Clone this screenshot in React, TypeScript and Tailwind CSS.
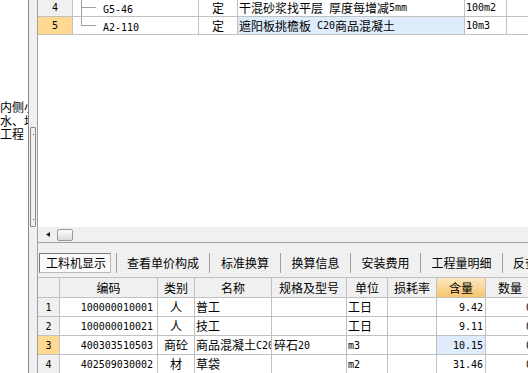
import React from 'react';

type TopRow = { no: string; code: string; type: string; name: string; unit: string; last: boolean; active: boolean };
type ResRow = { no: string; code: string; kind: string; name: string; spec: string; unit: string; loss: string; qty: string; amount: string; active: boolean };

const topRows: TopRow[] = [
  { no: '4', code: 'G5-46', type: '定', name: '干混砂浆找平层 厚度每增减5mm', unit: '100m2', last: false, active: false },
  { no: '5', code: 'A2-110', type: '定', name: '遮阳板挑檐板 C20商品混凝土', unit: '10m3', last: true, active: true },
];

const resRows: ResRow[] = [
  { no: '1', code: '100000010001', kind: '人', name: '普工', spec: '', unit: '工日', loss: '', qty: '9.42', amount: '0', active: false },
  { no: '2', code: '100000010021', kind: '人', name: '技工', spec: '', unit: '工日', loss: '', qty: '9.11', amount: '0', active: false },
  { no: '3', code: '400303510503', kind: '商砼', name: '商品混凝土C20', spec: '碎石20', unit: 'm3', loss: '', qty: '10.15', amount: '0', active: true },
  { no: '4', code: '402509030002', kind: '材', name: '草袋', spec: '', unit: 'm2', loss: '', qty: '31.46', amount: '0', active: false },
];

const tabs = [
  { label: '查看单价构成', w: 'w-[92px]' },
  { label: '标准换算', w: 'w-[70px]' },
  { label: '换算信息', w: 'w-[69px]' },
  { label: '安装费用', w: 'w-[69px]' },
  { label: '工程量明细', w: 'w-[81px]' },
];

// ascii runs get the narrow monospace face, like the half-width glyphs of the original
const Mixed: React.FC<{ text: string }> = ({ text }) => {
  const parts = text.match(/[\x20-\x7e]+|[^\x20-\x7e]+/g) ?? [];
  return (
    <>
      {parts.map((p, i) =>
        /^[\x20-\x7e]+$/.test(p) ? (
          <span key={i} className="font-['DejaVu_Sans_Mono',monospace] text-[10px] whitespace-pre">
            {p}
          </span>
        ) : (
          <span key={i}>{p}</span>
        )
      )}
    </>
  );
};

const cell = 'shrink-0 h-full flex items-center border-r border-[#c0c0c0] overflow-hidden whitespace-nowrap';

export default function App() {
  return (
    <div className="w-[528px] h-[373px] overflow-hidden bg-white flex text-[12px] text-black font-['Noto_Sans_CJK_SC',sans-serif]">
      {/* left pane, mostly hidden behind the splitter */}
      <div className="w-[28px] shrink-0 overflow-hidden pt-[100px] leading-[13.5px] whitespace-nowrap">
        <div>内侧小</div>
        <div>水、地</div>
        <div>工程</div>
      </div>

      {/* splitter */}
      <div className="w-[9px] shrink-0 bg-[#f0f0f0] border-l border-[#8a8a8a] pl-px pt-[127px]">
        <div className="w-[6px] h-[100px] border border-[#8a8a8a] rounded-[1px] flex flex-col items-center justify-between py-[6px]">
          <div className="w-px h-px bg-[#404080]" />
          <div className="w-px h-px bg-[#404080]" />
        </div>
      </div>

      {/* main */}
      <div className="w-[491px] shrink-0 flex flex-col border-l border-[#a0a0a0]">
        {/* top grid */}
        <div className="h-[227px] shrink-0 overflow-hidden">
          <div className="-mt-px">
            {topRows.map((r) => (
              <div key={r.no} className="flex h-[18px] border-b border-[#c0c0c0]">
                <div className={`${cell} w-[35px] justify-center ${r.active ? 'bg-[#ffd991]' : 'bg-[#f0f0f0]'}`}>
                  <Mixed text={r.no} />
                </div>
                <div className={`${cell} w-[126px]`}>
                  <svg width="23" height="17" className="shrink-0">
                    <path d={r.last ? 'M8.5 0V8.5H23' : 'M8.5 0V17M8.5 8.5H23'} stroke="#a0a0a0" fill="none" />
                  </svg>
                  <span className="ml-[7px]">
                    <Mixed text={r.code} />
                  </span>
                </div>
                <div className={`${cell} w-[39px] justify-center`}>{r.type}</div>
                <div className={`${cell} w-[227px] pl-px ${r.active ? 'bg-[#deecfc]' : ''}`}>
                  <Mixed text={r.name} />
                </div>
                <div className={`${cell} w-[42px] pl-px`}>
                  <Mixed text={r.unit} />
                </div>
                <div className="flex-1" />
              </div>
            ))}
          </div>
        </div>

        {/* horizontal scrollbar */}
        <div className="h-[16px] shrink-0 bg-[#f0f0f0] border-b border-[#a0a0a0] flex items-center">
          <svg width="4" height="5" className="ml-[8px] shrink-0">
            <path d="M0 2.5L4 0V5Z" fill="#202020" />
          </svg>
          <div className="ml-[7px] w-[16px] h-[12px] rounded-[2px] border border-[#9a9a9a] bg-linear-to-b from-[#fdfdfd] to-[#dcdcdc]" />
        </div>

        {/* tab strip */}
        <div className="h-[34px] shrink-0 bg-[#f0f0f0] pt-[10px] pb-[4px]">
          <div className="h-[20px] flex items-stretch">
            <div className="ml-px w-[72px] shrink-0 flex items-center pl-[6px] bg-[#fafafa] border border-[#b8b8b8] border-t-[#7a7a7a] border-l-[#7a7a7a]">
              工料机显示
            </div>
            <div className="w-[5px] shrink-0" />
            {tabs.map((t) => (
              <React.Fragment key={t.label}>
                <div className="w-px shrink-0 bg-[#a0a0a0]" />
                <div className={`${t.w} shrink-0 flex items-center justify-center whitespace-nowrap`}>{t.label}</div>
              </React.Fragment>
            ))}
            <div className="w-px shrink-0 bg-[#a0a0a0]" />
            <div className="pl-[10px] flex items-center whitespace-nowrap">反查图形工程量</div>
          </div>
        </div>

        {/* resource grid */}
        <div className="flex-1 border-t border-[#c0c0c0] overflow-hidden">
          <div className="flex h-[20px] border-b border-[#c0c0c0] bg-[#f0f0f0]">
            <div className={`${cell} w-[22px]`} />
            <div className={`${cell} w-[98px] justify-center`}>编码</div>
            <div className={`${cell} w-[37px] justify-center`}>类别</div>
            <div className={`${cell} w-[77px] justify-center`}>名称</div>
            <div className={`${cell} w-[75px] justify-center`}>规格及型号</div>
            <div className={`${cell} w-[41px] justify-center`}>单位</div>
            <div className={`${cell} w-[49px] justify-center`}>损耗率</div>
            <div className={`${cell} w-[49px] justify-center bg-linear-to-b from-[#fde8c0] to-[#f6c46c]`}>含量</div>
            <div className={`${cell} w-[49px] justify-center`}>数量</div>
          </div>
          {resRows.map((r) => (
            <div key={r.no} className="flex h-[19px] border-b border-[#c0c0c0]">
              <div className={`${cell} w-[22px] justify-center ${r.active ? 'bg-[#ffd991]' : 'bg-[#f0f0f0]'}`}>
                <Mixed text={r.no} />
              </div>
              <div className={`${cell} w-[98px] justify-end pr-[4px]`}>
                <Mixed text={r.code} />
              </div>
              <div className={`${cell} w-[37px] justify-center`}>{r.kind}</div>
              <div className={`${cell} w-[77px] pl-px`}>
                <Mixed text={r.name} />
              </div>
              <div className={`${cell} w-[75px] pl-[2px]`}>
                <Mixed text={r.spec} />
              </div>
              <div className={`${cell} w-[41px] pl-px`}>
                <Mixed text={r.unit} />
              </div>
              <div className={`${cell} w-[49px]`}>{r.loss}</div>
              <div className={`${cell} w-[49px] justify-end pr-[2px] ${r.active ? 'bg-[#deecfc]' : ''}`}>
                <Mixed text={r.qty} />
              </div>
              <div className={`${cell} w-[49px] justify-end pr-[2px]`}>
                <Mixed text={r.amount} />
              </div>
            </div>
          ))}
        </div>
      </div>
    </div>
  );
}
